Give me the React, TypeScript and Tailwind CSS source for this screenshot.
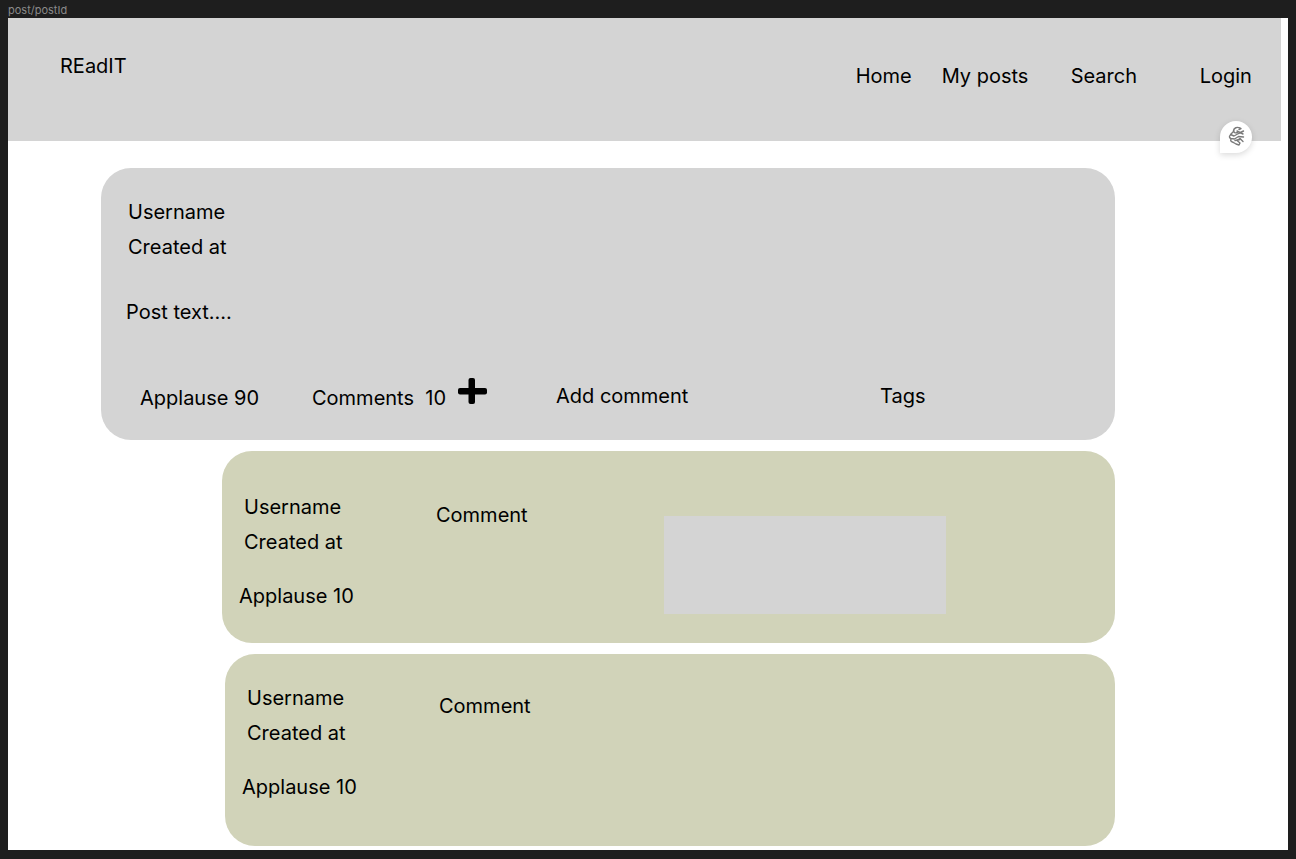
const CommentCard = ({ compact, box }: { compact?: boolean; box?: boolean }) => (
  <div className="h-[192px] w-full rounded-[30px] bg-[#d1d3b9] flex relative">
    <div className={compact ? "pt-8 pl-[22px] w-[214px] shrink-0" : "pt-11 pl-[22px] w-[214px] shrink-0"}>
      <p>Username</p>
      <p className="mt-[11px]">Created at</p>
      <p className="mt-[30px] -ml-[5px]">Applause 10</p>
    </div>
    <p className={compact ? "mt-10" : "mt-[52px]"}>Comment</p>
    {box && <div className="absolute left-[442px] top-[65px] w-[282px] h-[98px] bg-[#d4d4d4]" />}
  </div>
);

export default function App() {
  return (
    <div className="w-[1296px] h-[859px] bg-[#1e1e1e] overflow-hidden relative font-['Inter',sans-serif] text-[20px] leading-[24px] text-black">
      <p className="h-[18px] pl-2 pt-[4px] text-[11px] leading-[12px] text-[#8a8a8a]">post/postId</p>
      <div className="ml-2 w-[1280px] h-[832px] bg-white">
        <header className="relative w-[1273px] h-[123px] bg-[#d4d4d4] flex">
          <p className="ml-[52px] mt-9">REadIT</p>
          <nav className="flex mt-[46px] ml-[729px]">
            <a className="w-[86px]">Home</a>
            <a className="w-[129px]">My posts</a>
            <a className="w-[129px]">Search</a>
            <a>Login</a>
          </nav>
          <div className="absolute left-[1212px] top-[103px] w-8 h-8 rounded-full rounded-bl-none bg-white shadow-[0_2px_6px_rgba(0,0,0,0.15)] flex items-center justify-center">
            <svg width="26" height="26" viewBox="0 0 26 26" fill="none" stroke="#7a7a7a" strokeWidth="1.4" strokeLinecap="round" strokeLinejoin="round">
              <path d="M17 4c-3-1.500-6 0-6.500 2.500-.4 2 2 3 4 2" />
              <path d="M11 7 7.500 10.500l3.500 1.500 4.500-2.500 5-2.500" />
              <path d="M7.500 11c-1.500 1-1.500 3 .5 3.500l3.500.5 4-2.500 5 .5" />
              <path d="M8 15c-1 2 .5 3 2.500 3.500l2.500 1.500 3 1 1-2-3-2.500 3-2 3 3" />
              <path d="M14 7l6 3M16 5.500l2-1M12 16.500l5-1" />
            </svg>
          </div>
        </header>

        <main className="ml-[93px] w-[1014px] pt-[27px] flex flex-col">
          <section className="h-[272px] rounded-[30px] bg-[#d4d4d4] pt-8">
            <div className="pl-[27px]">
              <p>Username</p>
              <p className="mt-[11px]">Created at</p>
            </div>
            <p className="mt-[41px] pl-[25px]">Post text....</p>
            <div className="flex mt-[60px] pl-[39px] items-start">
              <p className="w-[172px] mt-[2px]">Applause 90</p>
              <p className="w-[146px] mt-[2px] whitespace-pre">Comments  10</p>
              <svg width="29" height="26" viewBox="0 0 29 26" className="-mt-[6px]" fill="black">
                <rect x="10.500" y="0" width="6.500" height="26" rx="2" />
                <rect x="0" y="10" width="29" height="6.500" rx="2" />
              </svg>
              <p className="ml-[69px] w-[324px]">Add comment</p>
              <p>Tags</p>
            </div>
          </section>
          <div className="mt-[11px] pl-[121px]">
            <CommentCard box />
          </div>
          <div className="mt-[11px] pl-[124px]">
            <CommentCard compact />
          </div>
        </main>
      </div>
    </div>
  );
}
